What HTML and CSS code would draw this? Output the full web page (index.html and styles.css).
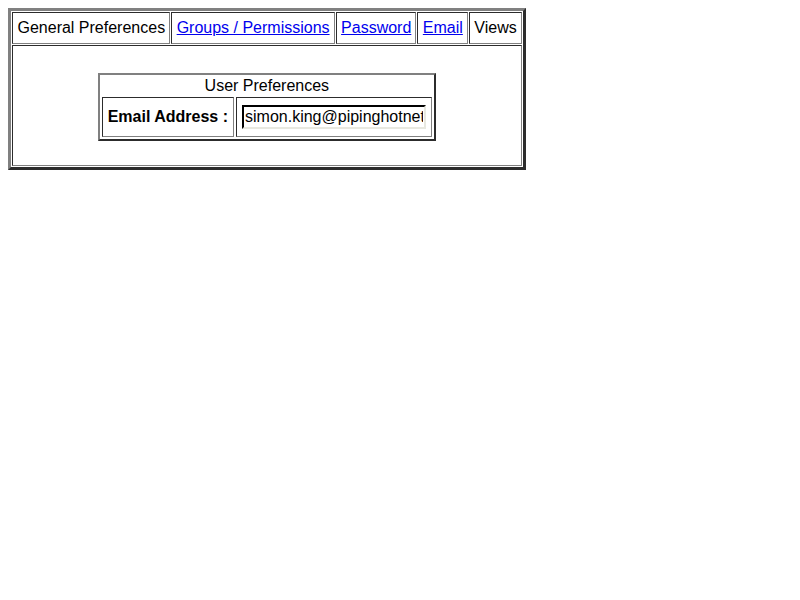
FILE: index.html
```html
<!DOCTYPE html>
<html>
<head>
<meta charset="utf-8">
<link rel="stylesheet" href="styles.css">
</head>
<body>
<table class="outer">
  <tr>
    <td class="tab">General Preferences</td>
    <td class="tab"><a href="#">Groups / Permissions</a></td>
    <td class="tab"><a href="#">Password</a></td>
    <td class="tab"><a href="#">Email</a></td>
    <td class="tab">Views</td>
  </tr>
  <tr>
    <td class="body" colspan="5">
      <table class="inner">
        <tr><td class="head" colspan="2">User Preferences</td></tr>
        <tr>
          <td class="label">Email Address :</td>
          <td class="field"><input class="email" type="text" value="simon.king@pipinghotnet.com"></td>
        </tr>
      </table>
    </td>
  </tr>
</table>
</body>
</html>
```
FILE: styles.css
```css
body {
  margin: 8px;
  background: #fff;
  font-family: "Liberation Sans", Arial, sans-serif;
  font-size: 16px;
  color: #000;
}
.outer {
  border: 3px outset #808080;
  border-spacing: 1px;
  border-collapse: separate;
}
.outer td {
  border: 1px inset #808080;
}
.tab {
  padding: 5px 4px 5px 4.5px;
  line-height: 20px;
  white-space: nowrap;
}
.tab a {
  color: #0000ee;
}
.body {
  padding: 27px 4px 24px 4px;
}
.inner {
  margin: 0 auto;
  border: 2px outset #808080;
  border-spacing: 2px;
}
.outer .inner td.head {
  border: none;
  padding: 0 1px;
  text-align: center;
  line-height: 18px;
}
.inner td.label {
  font-weight: bold;
  padding: 10px 5px;
  line-height: 18px;
  white-space: nowrap;
}
.inner td.field {
  padding: 6px 5px;
}
.email {
  width: 178px;
  height: 20px;
  box-sizing: content-box;
  padding: 0 1px;
  border: 2px inset #e0e0e0;
  border-top-color: #222;
  border-left-color: #222;
  border-right-color: #e8e8e0;
  border-bottom-color: #e8e8e0;
  font-family: "Liberation Sans", Arial, sans-serif;
  font-size: 16px;
  background: #fff;
  color: #000;
  display: block;
}
```
